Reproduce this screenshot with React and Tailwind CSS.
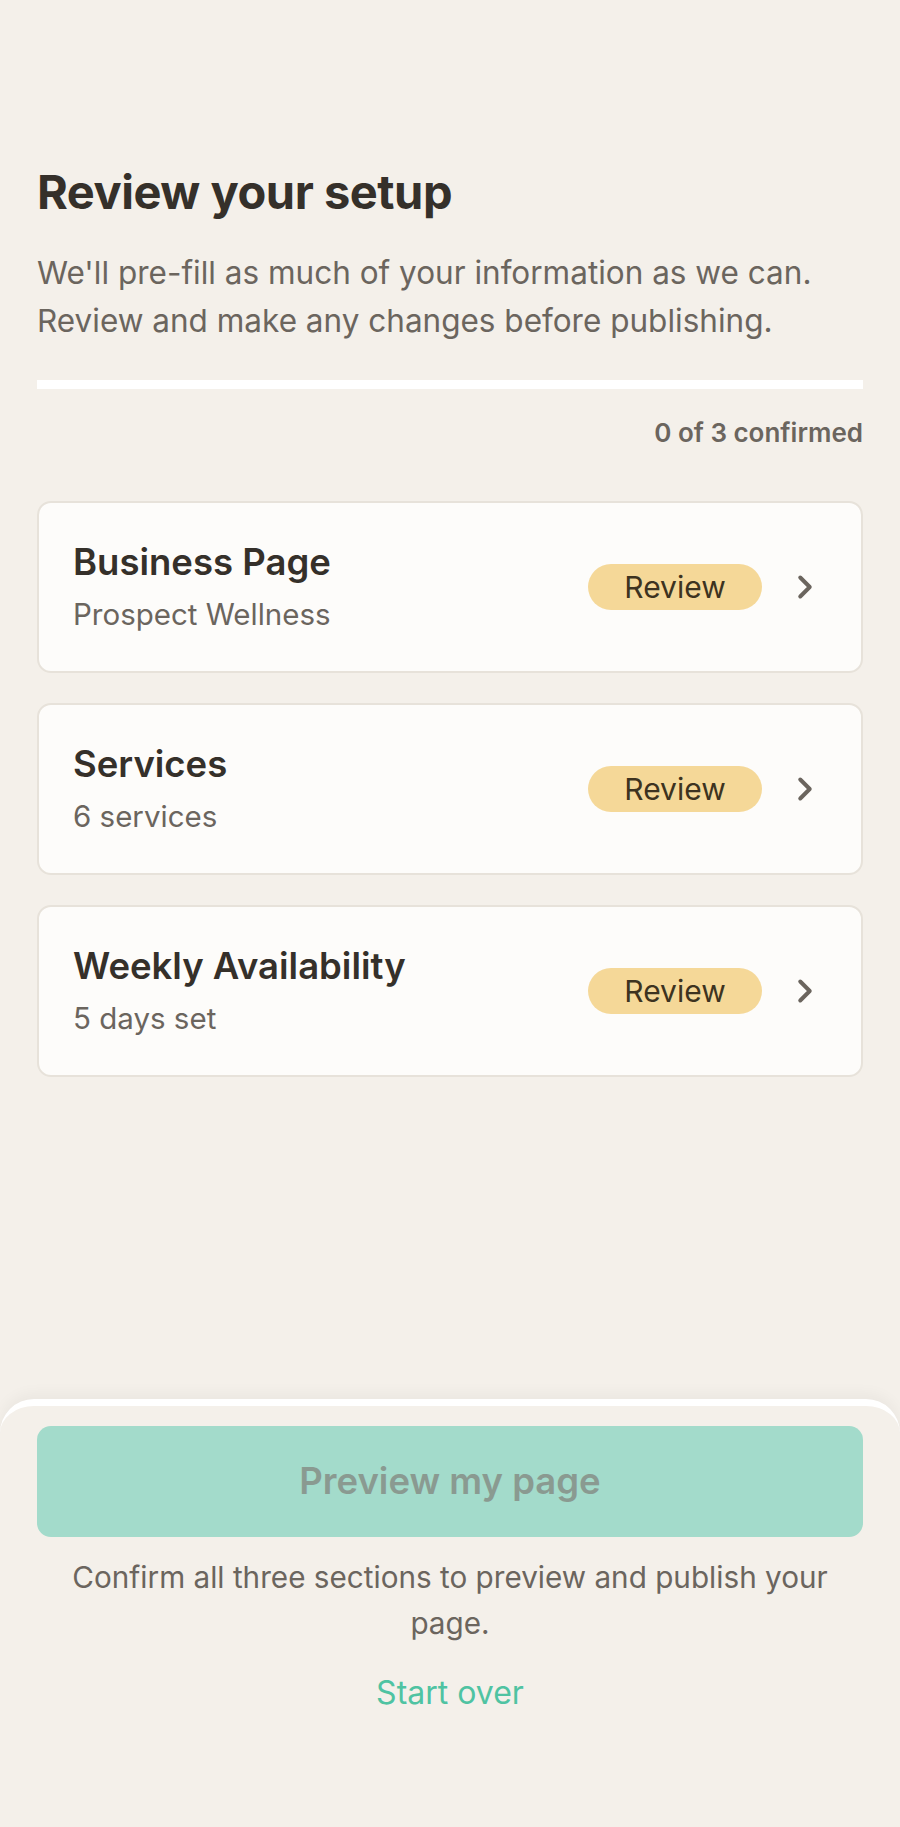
import React from "react";
import { ChevronRight } from "lucide-react";

const sections = [
  { title: "Business Page", detail: "Prospect Wellness" },
  { title: "Services", detail: "6 services" },
  { title: "Weekly Availability", detail: "5 days set" },
];

function SectionCard({ title, detail }) {
  return (
    <button className="flex w-full items-center rounded-[14px] border-2 border-[#e7e2da] bg-[#fdfcfa] py-[36px] pl-[34px] pr-[37px] text-left">
      <div className="flex flex-1 flex-col">
        <span className="text-[36.5px] font-semibold leading-[46px] text-[#35302a]">{title}</span>
        <span className="mt-[8px] text-[29.5px] leading-[42px] text-[#6b655e]">{detail}</span>
      </div>
      <span className="flex h-[46px] w-[174px] items-center justify-center rounded-full bg-[#f5d898] text-[30px] text-[#3d3320]">
        Review
      </span>
      <ChevronRight className="ml-[24px] text-[#6b655e]" size={38} strokeWidth={2.5} />
    </button>
  );
}

export default function App() {
  return (
    <div
      className="flex min-h-screen flex-col bg-[#f4f0ea]"
      style={{ fontFamily: "Inter, 'Noto Sans', sans-serif" }}
    >
      <main className="px-[37px] pt-[164px]">
        <h1 className="text-[47px] font-bold leading-[56px] tracking-[-0.01em] text-[#35302a]">
          Review your setup
        </h1>
        <p className="mt-[29px] text-[31.5px] leading-[48px] text-[#6b655e]">
          We'll pre-fill as much of your information as we can. Review and make any changes before publishing.
        </p>

        <div className="mt-[35px] h-[9px] w-full bg-white" />
        <p className="mt-[28px] text-right text-[26px] font-semibold leading-[32px] text-[#6b655e]">
          0 of 3 confirmed
        </p>

        <div className="mt-[52px] flex flex-col gap-[30px]">
          {sections.map((s) => (
            <SectionCard key={s.title} {...s} />
          ))}
        </div>
      </main>

      <footer className="mt-auto rounded-t-[34px] border-t-[7px] border-white bg-[#f4f0ea] px-[37px] pb-[111px] pt-[20px] shadow-[0_-6px_14px_rgba(0,0,0,0.04)]">
        <button className="flex h-[111px] w-full items-center justify-center rounded-[14px] bg-[#a3dbcb] text-[36.5px] font-semibold text-[#8a9a91]">
          Preview my page
        </button>
        <p className="mt-[17px] px-[20px] text-center text-[29.7px] leading-[46px] text-[#6b655e]">
          Confirm all three sections to preview and publish your page.
        </p>
        <p className="mt-[24px] text-center text-[32px] leading-[46px] text-[#4fc3a2]">
          Start over
        </p>
      </footer>
    </div>
  );
}
